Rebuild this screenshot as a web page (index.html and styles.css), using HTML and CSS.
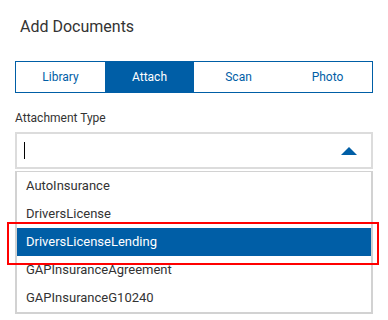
FILE: index.html
```html
<!DOCTYPE html>
<html>
<head>
<meta charset="utf-8">
<link rel="stylesheet" href="styles.css">
</head>
<body>
<div class="page">
  <h1 class="title">Add Documents</h1>
  <div class="tabs">
    <div class="tab">Library</div>
    <div class="tab active">Attach</div>
    <div class="tab">Scan</div>
    <div class="tab">Photo</div>
  </div>
  <div class="label">Attachment Type</div>
  <div class="select">
    <span class="caret"></span>
    <span class="arrow"></span>
  </div>
  <ul class="list">
    <li class="item">AutoInsurance</li>
    <li class="item">DriversLicense</li>
    <li class="item selected">DriversLicenseLending</li>
    <li class="item">GAPInsuranceAgreement</li>
    <li class="item">GAPInsuranceG10240</li>
  </ul>
  <div class="highlight-box"></div>
</div>
</body>
</html>
```
FILE: styles.css
```css
* { box-sizing: border-box; }
html, body { margin: 0; padding: 0; background: #fff; }
body { font-family: Roboto, "Liberation Sans", Arial, sans-serif; color: #333; }
.page { position: relative; padding: 17px 15px 0 15px; width: 388px; height: 320px; overflow: hidden; }
.title { margin: 0 0 24px 5px; font-size: 16px; line-height: 20px; font-weight: 400; color: #333; }
.tabs { display: grid; grid-template-columns: repeat(4, 1fr); height: 32px; border: 1px solid #005ea6; width: 358px; }
.tab { display: flex; align-items: center; justify-content: center; font-size: 12px; color: #005ea6; }
.tab.active { background: #005ea6; color: #fff; }
.label { margin-top: 18px; font-size: 12px; line-height: 14px; color: #333; }
.select { margin-top: 7px; height: 37px; width: 358px; border: 2px solid #dcdcdc; display: flex; align-items: center; justify-content: space-between; padding: 0 14px 0 7px; }
.caret { display: block; width: 1px; height: 17px; background: #000; }
.arrow { display: block; width: 0; height: 0; border-left: 8px solid transparent; border-right: 8px solid transparent; border-bottom: 8px solid #005ea6; }
.list { list-style: none; margin: 2px 0 0 0; padding: 0; width: 358px; border-style: solid; border-color: #d2d2d2; border-width: 1px 2px 2px 2px; }
.item { height: 28px; line-height: 28px; font-size: 13px; padding-left: 9px; color: #333; }
.item.selected { background: #005ea6; color: #fff; }
.highlight-box { position: absolute; left: 7px; top: 222px; width: 372px; height: 43px; border: 2px solid #f00; }
```
